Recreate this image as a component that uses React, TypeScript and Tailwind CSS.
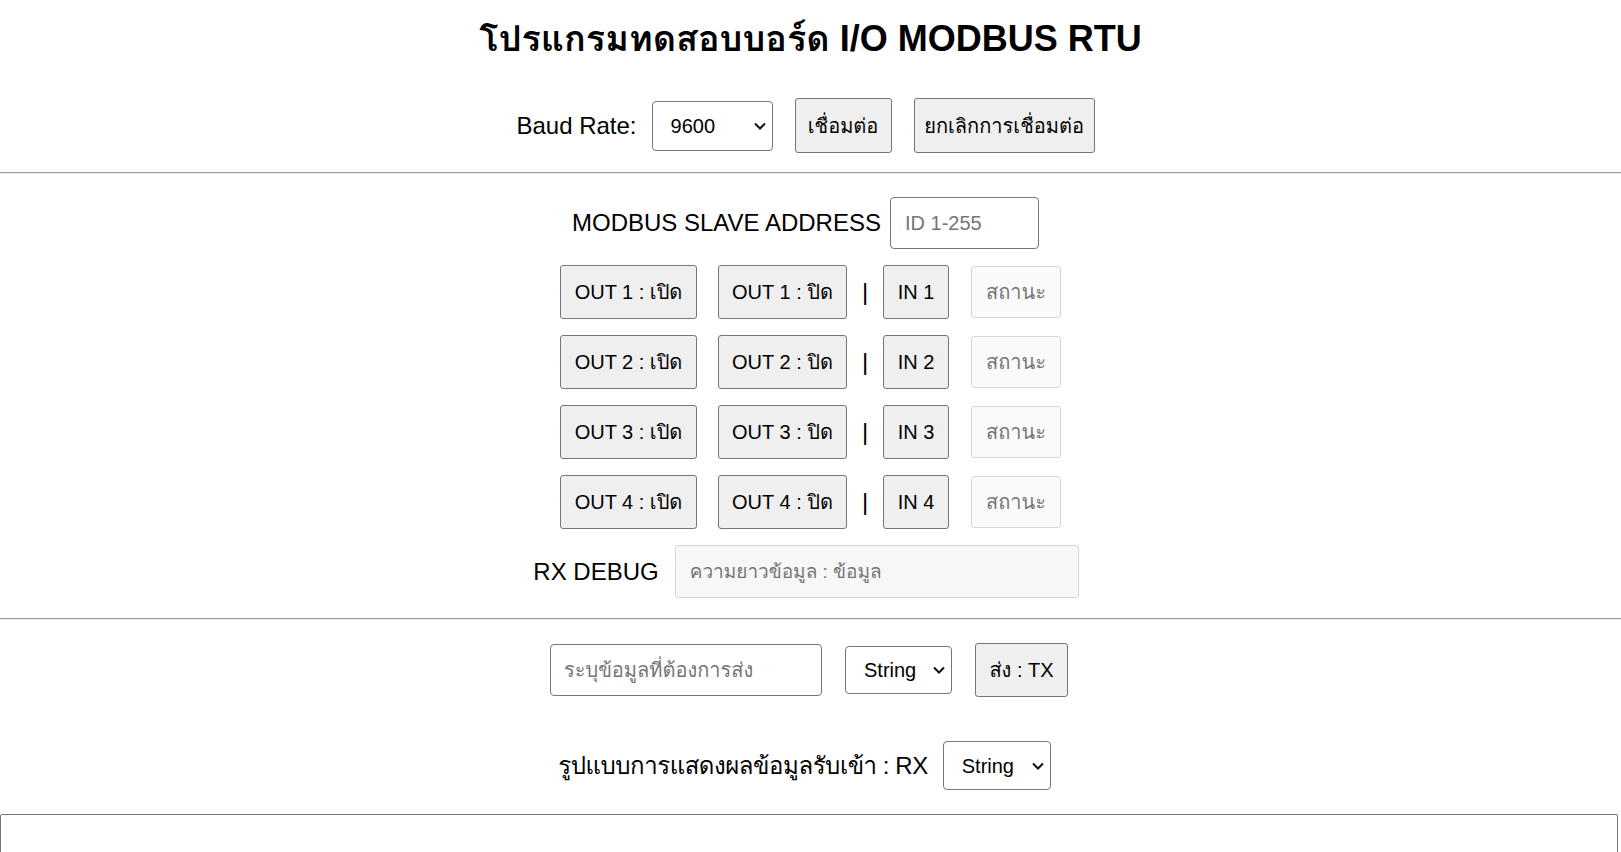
import React from 'react';

const font = {
  fontFamily:
    '"Liberation Sans", Arial, Loma, "Noto Sans Thai Looped", Garuda, Tahoma, "Noto Sans Thai", sans-serif',
};

const btn =
  'h-[54px] rounded-[3px] border border-[#767676] bg-[#efefef] text-[20px] text-black flex items-center justify-center';

const Chevron: React.FC = () => (
  <svg
    className="pointer-events-none absolute right-[6px] top-1/2 -translate-y-1/2"
    width="14"
    height="9"
    viewBox="0 0 14 9"
    fill="none"
  >
    <path d="M2 2 L7 7 L12 2" stroke="#111" strokeWidth="2" />
  </svg>
);

const Select: React.FC<{ value: string; options: string[]; className: string }> = ({ value, options, className }) => (
  <div className={`relative ${className}`}>
    <select
      defaultValue={value}
      className="h-full w-full appearance-none rounded-[4px] border border-[#767676] bg-white pl-[18px] text-[20px] text-black outline-none"
    >
      {options.map((o) => (
        <option key={o}>{o}</option>
      ))}
    </select>
    <Chevron />
  </div>
);

const Divider: React.FC = () => (
  <div className="w-full border-t border-b border-t-[#9a9a9a] border-b-[#eeeeee]" />
);

const IoRow: React.FC<{ n: number }> = ({ n }) => (
  <div className="flex items-center justify-center">
    <button className={`${btn} w-[137px]`}>OUT {n} : เปิด</button>
    <button className={`${btn} ml-[21px] w-[129px]`}>OUT {n} : ปิด</button>
    <span className="w-[36px] text-center text-[24px] leading-none">|</span>
    <button className={`${btn} h-[52px] w-[66px]`}>IN {n}</button>
    <input
      disabled
      placeholder="สถานะ"
      className="ml-[22px] h-[52px] w-[90px] rounded-[3px] border border-[#d6d6d6] bg-[#fafafa] text-center text-[20px] placeholder:text-[#757575]"
    />
  </div>
);

export default function App() {
  return (
    <div className="h-screen overflow-hidden bg-white text-black" style={font}>
      <h1 className="pt-[17px] text-center text-[36px] font-bold leading-[44px]">
        โปรแกรมทดสอบบอร์ด I/O MODBUS RTU
      </h1>

      {/* connection */}
      <div className="mt-[37px] flex h-[55px] items-center justify-center pr-[10px]">
        <span className="text-[24px]">Baud Rate:</span>
        <Select value="9600" options={['9600', '19200', '38400', '57600', '115200']} className="ml-[15px] h-[50px] w-[121px]" />
        <button className={`${btn} ml-[22px] h-[55px] w-[97px]`}>เชื่อมต่อ</button>
        <button className={`${btn} ml-[22px] h-[55px] w-[181px]`}>ยกเลิกการเชื่อมต่อ</button>
      </div>

      <div className="mt-[19px]">
        <Divider />
      </div>

      {/* modbus io */}
      <div className="mt-[23px] flex items-center justify-center pr-[10px]">
        <span className="text-[24px]">MODBUS SLAVE ADDRESS</span>
        <input
          placeholder="ID 1-255"
          className="ml-[9px] h-[52px] w-[149px] rounded-[4px] border border-[#767676] px-[14px] text-[20px] outline-none placeholder:text-[#757575]"
        />
      </div>

      <div className="mt-[16px] flex flex-col gap-[16px]">
        {[1, 2, 3, 4].map((n) => (
          <IoRow key={n} n={n} />
        ))}
        <div className="flex items-center justify-center pr-[9px]">
          <span className="text-[24px]">RX DEBUG</span>
          <input
            disabled
            placeholder="ความยาวข้อมูล : ข้อมูล"
            className="ml-[16px] h-[53px] w-[404px] rounded-[3px] border border-[#d6d6d6] bg-[#f7f7f7] px-[14px] text-[19px] placeholder:text-[#757575]"
          />
        </div>
      </div>

      <div className="mt-[20px]">
        <Divider />
      </div>

      {/* tx */}
      <div className="mt-[23px] flex h-[54px] items-center justify-center pr-[3px]">
        <input
          placeholder="ระบุข้อมูลที่ต้องการส่ง"
          className="h-[52px] w-[272px] rounded-[4px] border border-[#767676] px-[13px] text-[20px] outline-none placeholder:text-[#757575]"
        />
        <Select value="String" options={['String', 'Hex']} className="ml-[23px] h-[48px] w-[107px]" />
        <button className={`${btn} ml-[23px] w-[93px]`}>ส่ง : TX</button>
      </div>

      <div className="mt-[44px] flex h-[49px] items-center justify-center pr-[12px]">
        <span className="text-[24px] tracking-[-0.45px]">รูปแบบการแสดงผลข้อมูลรับเข้า : RX</span>
        <Select value="String" options={['String', 'Hex']} className="ml-[15px] h-[49px] w-[108px]" />
      </div>

      <textarea className="mt-[24px] block h-[200px] w-[calc(100%-3px)] resize-none rounded-[2px] border border-[#767676] outline-none" />
    </div>
  );
}
